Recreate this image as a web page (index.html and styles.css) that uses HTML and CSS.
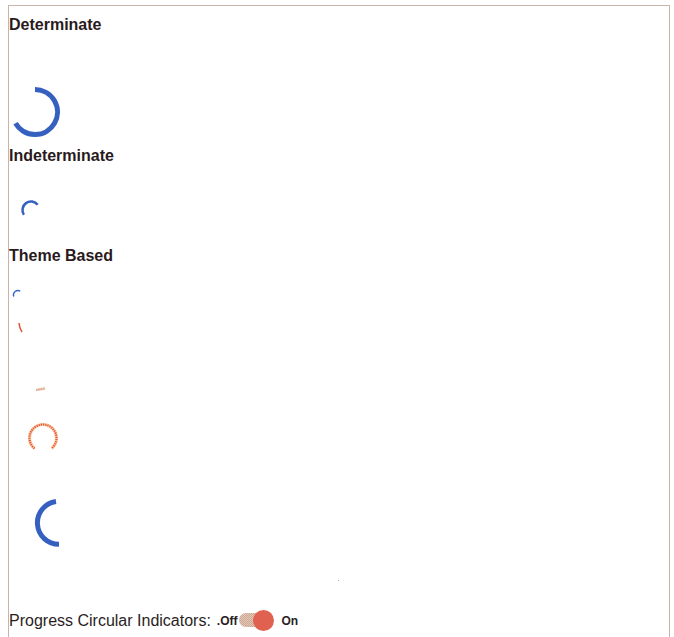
FILE: index.html
```html
<!DOCTYPE html>
<html lang="en">
<head>
<meta charset="utf-8">
<title>Progress Circular</title>
<link rel="stylesheet" href="styles.css">
</head>
<body>
<div class="panel">
  <h3 class="title t-det">Determinate</h3>
  <svg class="spin det" width="50" height="50" viewBox="0 0 50 50">
    <path d="M25 2.5 A22.5 22.5 0 1 1 5.51 36.25" fill="none" stroke="#3560c0" stroke-width="5"/>
  </svg>

  <h3 class="title t-ind">Indeterminate</h3>
  <svg class="spin ind" width="40" height="40" viewBox="0 0 40 40">
    <path d="M12.95 24.75 A8.5 8.5 0 0 1 26.7 14.77" fill="none" stroke="#3560c0" stroke-width="2.5"/>
  </svg>

  <h3 class="title t-theme">Theme Based</h3>
  <div class="theme">
    <svg class="spin th1" width="12" height="12" viewBox="0 0 12 12">
      <path d="M1.77 7.54 A4.5 4.5 0 0 1 8.25 2.1" fill="none" stroke="#3a68cc" stroke-width="1.5"/>
    </svg>
    <svg class="spin th2" width="10" height="14" viewBox="0 0 10 14">
      <path d="M3 3 Q3.4 8 6 12" fill="none" stroke="#e05a40" stroke-width="1.6"/>
    </svg>
    <svg class="spin th3" width="14" height="9" viewBox="0 0 14 9">
      <path d="M2 6 L11 4.5" fill="none" stroke="#e9c6a6" stroke-width="2.5"/>
      <path d="M2 6 L11 4.5" fill="none" stroke="#cfa0a0" stroke-width="1.2" stroke-dasharray="1 1.5"/>
    </svg>
    <svg class="spin th4" width="34" height="34" viewBox="0 0 34 34">
      <path d="M8.5 27.49 A13.5 13.5 0 1 1 25.5 27.49" fill="none" stroke="#f8cca2" stroke-width="3.2"/>
      <path d="M8.5 27.49 A13.5 13.5 0 1 1 25.5 27.49" fill="none" stroke="#e6523b" stroke-width="2" stroke-dasharray="1.2 1"/>
    </svg>
    <svg class="spin th5" width="60" height="56" viewBox="0 0 60 56">
      <path d="M26 5.5 A21.5 21.5 0 0 0 29 48.3" fill="none" stroke="#3560c0" stroke-width="5"/>
    </svg>
    <div class="dot"></div>
  </div>

  <div class="controls">
    <span class="label">Progress Circular Indicators:</span>
    <span class="state off">.Off</span>
    <span class="switch"><span class="track"></span><span class="knob"></span></span>
    <span class="state on">On</span>
  </div>
</div>
</body>
</html>
```

FILE: styles.css
```css
html, body {
  margin: 0;
  padding: 0;
  background: #ffffff;
}

body {
  font-family: "Liberation Sans", Arial, sans-serif;
  color: #2a1e22;
}

.panel {
  margin: 5px 0 0 8px;
  width: 660px;
  height: 700px;
  border: 1px solid #c9b3ab;
}

.title {
  margin: 0;
  font-size: 16px;
  line-height: 18px;
  font-weight: bold;
  color: #2a1a20;
}

.t-det { margin-top: 10px; }
.t-ind { margin-top: 10px; }
.t-theme { margin-top: 17px; }

.spin { display: block; }

.det { margin: 53px 0 0 1px; }
.ind { margin: 25px 0 0 2px; }

.theme {
  display: flex;
  flex-direction: column;
  align-items: flex-start;
}

.th1 { margin: 24px 0 0 3px; }
.th2 { margin: 19px 0 0 7px; }
.th3 { margin: 50px 0 0 25px; }
.th4 { margin: 28px 0 0 17px; }
.th5 { margin: 41px 0 0 21px; }

.dot {
  margin: 28px 0 0 329px;
  width: 1px;
  height: 1px;
  background: #b9a0a6;
}

.controls {
  display: flex;
  align-items: center;
  height: 21px;
  margin-top: 29px;
}

.label {
  font-size: 16px;
  line-height: 18px;
  color: #2a1e24;
}

.state {
  font-size: 12px;
  font-weight: bold;
  line-height: 14px;
  color: #2a1e24;
}

.off { margin-left: 6px; }
.on { margin-left: 8px; }

.switch {
  position: relative;
  display: block;
  width: 35px;
  height: 21px;
  margin-left: 1px;
}

.track {
  position: absolute;
  left: 0;
  top: 3px;
  width: 30px;
  height: 14px;
  border-radius: 7px;
  background: repeating-conic-gradient(#e6c7ae 0 25%, #c9aa9c 0 50%) 0 0 / 2px 2px;
}

.knob {
  position: absolute;
  right: 0;
  top: 0;
  width: 21px;
  height: 21px;
  border-radius: 50%;
  background: #e0614f;
}
```
